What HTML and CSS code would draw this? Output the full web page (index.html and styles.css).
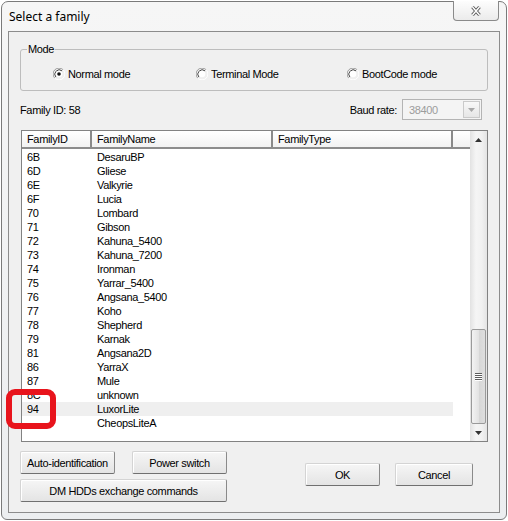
FILE: index.html
```html
<!DOCTYPE html>
<html lang="en">
<head>
    <meta charset="UTF-8">
    <title>Select a family</title>
    <link rel="stylesheet" href="styles.css">
</head>
<body>
    <div class="window">
        <div class="titlebar">
            <span class="title">Select a family</span>
            <div class="close">
                <svg width="14" height="12" viewBox="0 0 14 12">
                    <path d="M3.5 2 L10.5 10 M10.5 2 L3.5 10" stroke="#555" stroke-width="3.4" fill="none"/>
                    <path d="M3.5 2 L10.5 10 M10.5 2 L3.5 10" stroke="#fff" stroke-width="1.5" fill="none"/>
                </svg>
            </div>
        </div>
        <div class="client">
            <fieldset class="mode">
                <legend>Mode</legend>
                <div class="radios">
                    <label class="radio">
                        <svg width="12" height="12" viewBox="0 0 12 12">
                            <path d="M10.2 1.8 A5.9 5.9 0 0 0 1.8 10.2" stroke="#9a9a9a" fill="none"/>
                            <path d="M9.1 2.9 A4.4 4.4 0 0 0 2.9 9.1" stroke="#404040" fill="none"/>
                            <path d="M1.8 10.2 A5.9 5.9 0 0 0 10.2 1.8" stroke="#fff" fill="none"/>
                            <circle cx="6" cy="6" r="3.3" fill="#fff"/>
                            <circle cx="6" cy="6" r="1.8" fill="#111"/>
                        </svg>
                        Normal mode
                    </label>
                    <label class="radio">
                        <svg width="12" height="12" viewBox="0 0 12 12">
                            <path d="M10.2 1.8 A5.9 5.9 0 0 0 1.8 10.2" stroke="#9a9a9a" fill="none"/>
                            <path d="M9.1 2.9 A4.4 4.4 0 0 0 2.9 9.1" stroke="#404040" fill="none"/>
                            <path d="M1.8 10.2 A5.9 5.9 0 0 0 10.2 1.8" stroke="#fff" fill="none"/>
                            <circle cx="6" cy="6" r="3.3" fill="#fff"/>
                        </svg>
                        Terminal Mode
                    </label>
                    <label class="radio">
                        <svg width="12" height="12" viewBox="0 0 12 12">
                            <path d="M10.2 1.8 A5.9 5.9 0 0 0 1.8 10.2" stroke="#9a9a9a" fill="none"/>
                            <path d="M9.1 2.9 A4.4 4.4 0 0 0 2.9 9.1" stroke="#404040" fill="none"/>
                            <path d="M1.8 10.2 A5.9 5.9 0 0 0 10.2 1.8" stroke="#fff" fill="none"/>
                            <circle cx="6" cy="6" r="3.3" fill="#fff"/>
                        </svg>
                        BootCode mode
                    </label>
                </div>
            </fieldset>

            <div class="idrow">
                <span>Family ID: 58</span>
                <div class="baud">
                    <span>Baud rate:</span>
                    <div class="combo">
                        <span>38400</span>
                        <span class="drop">
                            <svg width="7" height="4" viewBox="0 0 7 4"><path d="M0 0 L7 0 L3.5 4 Z" fill="#a8a8a8"/></svg>
                        </span>
                    </div>
                </div>
            </div>

            <div class="list">
                <div class="list-main">
                    <div class="header">
                        <div class="hcell c1">FamilyID</div>
                        <div class="hcell c2">FamilyName</div>
                        <div class="hcell c3">FamilyType</div>
                        <div class="hcell filler"></div>
                    </div>
                    <div class="rows">
                        <div class="row"><span class="c1">6B</span><span class="c2">DesaruBP</span><span class="c3"></span></div>
                        <div class="row"><span class="c1">6D</span><span class="c2">Gliese</span><span class="c3"></span></div>
                        <div class="row"><span class="c1">6E</span><span class="c2">Valkyrie</span><span class="c3"></span></div>
                        <div class="row"><span class="c1">6F</span><span class="c2">Lucia</span><span class="c3"></span></div>
                        <div class="row"><span class="c1">70</span><span class="c2">Lombard</span><span class="c3"></span></div>
                        <div class="row"><span class="c1">71</span><span class="c2">Gibson</span><span class="c3"></span></div>
                        <div class="row"><span class="c1">72</span><span class="c2">Kahuna_5400</span><span class="c3"></span></div>
                        <div class="row"><span class="c1">73</span><span class="c2">Kahuna_7200</span><span class="c3"></span></div>
                        <div class="row"><span class="c1">74</span><span class="c2">Ironman</span><span class="c3"></span></div>
                        <div class="row"><span class="c1">75</span><span class="c2">Yarrar_5400</span><span class="c3"></span></div>
                        <div class="row"><span class="c1">76</span><span class="c2">Angsana_5400</span><span class="c3"></span></div>
                        <div class="row"><span class="c1">77</span><span class="c2">Koho</span><span class="c3"></span></div>
                        <div class="row"><span class="c1">78</span><span class="c2">Shepherd</span><span class="c3"></span></div>
                        <div class="row"><span class="c1">79</span><span class="c2">Karnak</span><span class="c3"></span></div>
                        <div class="row"><span class="c1">81</span><span class="c2">Angsana2D</span><span class="c3"></span></div>
                        <div class="row"><span class="c1">86</span><span class="c2">YarraX</span><span class="c3"></span></div>
                        <div class="row"><span class="c1">87</span><span class="c2">Mule</span><span class="c3"></span></div>
                        <div class="row"><span class="c1">8C</span><span class="c2">unknown</span><span class="c3"></span></div>
                        <div class="row selected"><span class="c1">94</span><span class="c2">LuxorLite</span><span class="c3"></span></div>
                        <div class="row"><span class="c1"></span><span class="c2">CheopsLiteA</span><span class="c3"></span></div>
                    </div>
                </div>
                <div class="scrollbar">
                    <div class="arrow">
                        <svg width="7" height="4" viewBox="0 0 7 4"><path d="M0 4 L3.5 0 L7 4 Z" fill="#333"/></svg>
                    </div>
                    <div class="track"></div>
                    <div class="thumb">
                        <div class="grip"></div>
                        <div class="grip"></div>
                        <div class="grip"></div>
                        <div class="grip"></div>
                    </div>
                    <div class="arrow">
                        <svg width="7" height="4" viewBox="0 0 7 4"><path d="M0 0 L7 0 L3.5 4 Z" fill="#333"/></svg>
                    </div>
                </div>
            </div>

            <div class="bottom">
                <div class="left-buttons">
                    <button>Auto-identification</button>
                    <button>Power switch</button>
                    <button class="wide">DM HDDs exchange commands</button>
                </div>
                <div class="right-buttons">
                    <button class="ok">OK</button>
                    <button class="cancel">Cancel</button>
                </div>
            </div>
        </div>
        <div class="mark"></div>
    </div>
</body>
</html>
```

FILE: styles.css
```css
body {
    margin: 0;
    padding: 1px;
    background: #fff;
    font-family: "Liberation Sans", Arial, sans-serif;
    font-size: 11px;
    letter-spacing: -0.35px;
    color: #000;
}
.window {
    position: relative;
    width: 506px;
    height: 519px;
    box-sizing: border-box;
    border: 1px solid #7a7a7a;
    border-radius: 7px 7px 6px 6px;
    background: linear-gradient(#f6f6f6, #eceef0);
    display: flex;
    flex-direction: column;
}
.titlebar {
    height: 29px;
    flex: none;
    display: flex;
    justify-content: space-between;
    align-items: flex-start;
    padding: 0 7px 0 7px;
}
.title {
    font-family: "Noto Sans", "Liberation Sans", sans-serif;
    font-size: 12px;
    letter-spacing: 0;
    line-height: 29px;
}
.close {
    width: 46px;
    height: 20px;
    margin-top: -1px;
    box-sizing: border-box;
    border: 1px solid #8a8a8a;
    border-top: none;
    border-radius: 0 0 4px 4px;
    background: linear-gradient(#fdfdfd, #ebebeb);
    display: flex;
    align-items: center;
    justify-content: center;
}
.client {
    flex: 1;
    margin: 0 6px 6px;
    border: 1px solid #8c8c8c;
    background: #f0f0f0;
    padding: 11px 11px 0 11px;
    display: flex;
    flex-direction: column;
}
.mode {
    margin: 0;
    padding: 11px 0 10px 0;
    border: 1px solid #bdbdbd;
    border-radius: 3px;
}
.mode legend {
    padding: 0 1px;
    margin-left: 6px;
    line-height: 13px;
}
.radios {
    display: grid;
    grid-template-columns: 143px 151px auto;
    height: 13px;
    padding-left: 32px;
    align-items: center;
}
.radio {
    display: flex;
    align-items: center;
    gap: 3px;
}
.idrow {
    display: flex;
    align-items: center;
    justify-content: space-between;
    height: 21px;
    margin-top: 8px;
    padding-right: 6px;
}
.baud {
    display: flex;
    align-items: center;
    gap: 5px;
}
.combo {
    width: 80px;
    height: 21px;
    box-sizing: border-box;
    border: 1px solid #b4b4b4;
    background: #f4f4f4;
    display: flex;
    align-items: center;
    justify-content: space-between;
    padding-left: 6px;
    color: #9c9c9c;
}
.drop {
    width: 17px;
    height: 17px;
    margin-right: 1px;
    box-sizing: border-box;
    border: 1px solid #cacaca;
    background: linear-gradient(#f8f8f8, #e6e6e6);
    display: flex;
    align-items: center;
    justify-content: center;
}
.list {
    margin-top: 10px;
    margin-left: 1px;
    height: 312px;
    box-sizing: border-box;
    border: 1px solid #828282;
    background: #fff;
    display: flex;
}
.list-main {
    flex: 1;
}
.header {
    display: flex;
    height: 18px;
    box-sizing: border-box;
    border-bottom: 2px solid #8c8c8c;
    background: linear-gradient(#fff, #f2f2f2);
}
.hcell {
    box-sizing: border-box;
    padding-left: 5px;
    line-height: 17px;
    border-right: 2px solid #8a8a8a;
}
.hcell.filler {
    flex: 1;
    border-right: none;
}
.c1, .c2, .c3 {
    box-sizing: border-box;
    padding-left: 5px;
    flex: none;
}
.c1 { width: 70px; }
.c2 { width: 181px; }
.c3 { width: 180px; }
.rows {
    padding-top: 1px;
}
.row {
    display: flex;
    width: 431px;
    height: 14px;
    line-height: 14px;
    white-space: nowrap;
}
.row.selected {
    background: #efefef;
}
.scrollbar {
    width: 17px;
    display: flex;
    flex-direction: column;
    background: linear-gradient(to right, #e2e2e2, #f5f5f5 35%, #f1f1f1 70%, #e4e4e4);
}
.arrow {
    height: 17px;
    flex: none;
    display: flex;
    align-items: center;
    justify-content: center;
}
.track {
    flex: 1;
}
.thumb {
    height: 95px;
    flex: none;
    margin: 0 1px;
    box-sizing: border-box;
    border: 1px solid #9a9a9a;
    border-radius: 2px;
    background: linear-gradient(to right, #f3f3f3, #e3e3e3 50%, #d6d6d6 51%, #dedede);
    display: flex;
    flex-direction: column;
    align-items: center;
    justify-content: center;
    gap: 1px;
}
.grip {
    width: 7px;
    height: 1px;
    background: #5c5c5c;
    box-shadow: 0 1px 0 #fff;
}
.bottom {
    display: flex;
    align-items: flex-start;
    margin-top: 9px;
}
.left-buttons {
    display: grid;
    grid-template-columns: 95px 95px;
    column-gap: 17px;
    row-gap: 5px;
}
.wide {
    grid-column: 1 / 3;
}
.right-buttons {
    margin-left: auto;
    margin-right: 15px;
    margin-top: 12px;
    display: flex;
    gap: 15px;
}
button {
    height: 23px;
    padding: 0;
    font-family: inherit;
    font-size: 11px;
    letter-spacing: -0.35px;
    color: #000;
    border: 1px solid;
    border-color: #d4d4d4 #8a8a8a #707070 #d4d4d4;
    border-radius: 2px;
    background: linear-gradient(#f6f6f6, #e4e4e4);
    box-shadow: inset 1px 1px 0 #fff;
}
.ok { width: 75px; }
.cancel { width: 78px; }
.mark {
    position: absolute;
    left: 4px;
    top: 387px;
    width: 50px;
    height: 40px;
    box-sizing: border-box;
    border: 6px solid #e8141c;
    border-radius: 9px;
}
```
